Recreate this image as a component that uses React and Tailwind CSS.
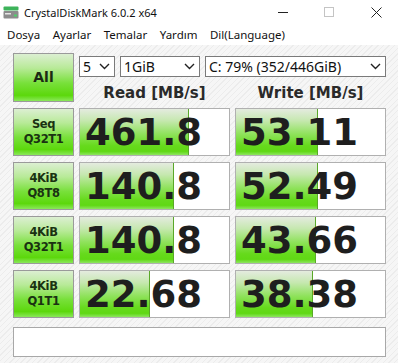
import { useState } from 'react'

const rows = [
  { top: 'Seq', bottom: 'Q32T1', read: '461.8', readBar: 109, write: '53.11', writeBar: 82 },
  { top: '4KiB', bottom: 'Q8T8', read: '140.8', readBar: 94, write: '52.49', writeBar: 82 },
  { top: '4KiB', bottom: 'Q32T1', read: '140.8', readBar: 94, write: '43.66', writeBar: 80 },
  { top: '4KiB', bottom: 'Q1T1', read: '22.68', readBar: 70, write: '38.38', writeBar: 77 },
]

const menus = ['Dosya', 'Ayarlar', 'Temalar', 'Yardım', 'Dil(Language)']

const greenBtn =
  'bg-[linear-gradient(to_bottom,#dcefd2_0%,#b8ea98_30%,#78e03a_62%,#5cd80c_88%,#8ae85a_100%)] border border-[#9a9a9a]'

function Chevron() {
  return (
    <svg width="11" height="7" viewBox="0 0 11 7" className="shrink-0">
      <polyline points="1,1 5.5,5.5 10,1" fill="none" stroke="#222" strokeWidth="1.4" />
    </svg>
  )
}

function Select({ value, className }) {
  return (
    <div className={`flex items-center justify-between h-[21px] bg-white border border-[#7a7a7a] pl-[3px] pr-[4px] ${className}`}>
      <span className="text-[14px] leading-none text-[#111] font-['Noto_Sans',sans-serif]">{value}</span>
      <Chevron />
    </div>
  )
}

function ValueBox({ value, bar }) {
  return (
    <div className="relative w-[151px] h-full bg-white border border-[#b0b0b0] overflow-hidden">
      <div
        className="absolute left-0 top-0 bottom-0 bg-[linear-gradient(to_bottom,#e4ebdf_0%,#c6e8b0_25%,#8ee25a_55%,#66da1c_80%,#60d814_92%,#8ee660_100%)] border-r border-[#5aa828]"
        style={{ width: bar }}
      />
      <span className="relative block pl-[5px] pt-[1px] text-[37px] leading-[46px] font-bold text-[#1e1e1e] font-['DejaVu_Sans',sans-serif]">
        {value}
      </span>
    </div>
  )
}

function AppIcon() {
  return (
    <svg width="16" height="13" viewBox="0 0 16 13">
      <rect x="0.5" y="0.5" width="15" height="4" rx="1" fill="#3db35a" />
      <rect x="0.5" y="5" width="15" height="7.5" rx="1" fill="#8c8c8c" />
      <rect x="2" y="7" width="6" height="1.5" fill="#e6e6e6" />
      <rect x="11" y="8.5" width="3" height="2" fill="#4fd16a" />
    </svg>
  )
}

export default function App() {
  const [title] = useState('CrystalDiskMark 6.0.2 x64')

  return (
    <div className="w-[398px] h-[363px] overflow-hidden bg-white font-['Noto_Sans',sans-serif]">
      {/* title bar */}
      <div className="flex items-center h-[24px] bg-white">
        <div className="pl-[3px] pr-[5px] flex items-center">
          <AppIcon />
        </div>
        <span className="text-[11px] text-[#111] leading-none">{title}</span>
        <div className="ml-auto flex items-center h-full">
          <div className="w-[46px] h-full flex items-center justify-center">
            <div className="w-[10px] h-px bg-[#222]" />
          </div>
          <div className="w-[46px] h-full flex items-center justify-center">
            <div className="w-[10px] h-[10px] border border-[#c4c4c4]" />
          </div>
          <div className="w-[46px] h-full flex items-center justify-center pl-[2px]">
            <svg width="11" height="11" viewBox="0 0 11 11">
              <path d="M0.5 0.5 L10.5 10.5 M10.5 0.5 L0.5 10.5" stroke="#222" strokeWidth="1" />
            </svg>
          </div>
        </div>
      </div>

      {/* menu bar */}
      <div className="flex items-center h-[21px] pl-[7px] gap-[12.5px] bg-white">
        {menus.map((m) => (
          <span key={m} className="text-[11.5px] text-[#111] leading-none">{m}</span>
        ))}
      </div>

      {/* main */}
      <div className="h-[318px] pt-[8px] pl-[13px] pr-[12px] bg-[repeating-linear-gradient(135deg,#f6f6f6_0px,#f6f6f6_3px,#ececec_3px,#ececec_4px)]">
        <div className="flex gap-[5px]">
          <div className={`w-[61px] h-[49px] flex items-center justify-center ${greenBtn}`}>
            <span className="text-[14px] font-bold text-[#1c2a14] font-['DejaVu_Sans',sans-serif]">All</span>
          </div>
          <div className="flex flex-col w-[307px]">
            <div className="flex gap-[5px] mt-[3px]">
              <Select value="5" className="w-[36px]" />
              <Select value="1GiB" className="w-[80px]" />
              <Select value="C: 79% (352/446GiB)" className="w-[181px]" />
            </div>
            <div className="flex gap-[5px] mt-[6px]">
              <div className="w-[151px] text-center text-[15px] font-bold text-[#2a2a2a] font-['DejaVu_Sans',sans-serif] leading-[20px]">
                Read [MB/s]
              </div>
              <div className="w-[151px] text-center text-[15px] font-bold text-[#2a2a2a] font-['DejaVu_Sans',sans-serif] leading-[20px]">
                Write [MB/s]
              </div>
            </div>
          </div>
        </div>

        <div className="flex flex-col gap-[6px] mt-[5px]">
          {rows.map((r, i) => (
            <div key={i} className="flex gap-[5px] h-[48px]">
              <div className={`w-[61px] h-full flex flex-col items-center justify-center ${greenBtn}`}>
                <span className="text-[11.5px] leading-[15px] font-bold text-[#1a3212] font-['DejaVu_Sans',sans-serif] tracking-[-0.4px]">{r.top}</span>
                <span className="text-[11.5px] leading-[15px] font-bold text-[#1a3212] font-['DejaVu_Sans',sans-serif] tracking-[-0.4px]">{r.bottom}</span>
              </div>
              <ValueBox value={r.read} bar={r.readBar} />
              <ValueBox value={r.write} bar={r.writeBar} />
            </div>
          ))}
        </div>

        <div className="mt-[9px] w-[373px] h-[30px] bg-white border border-[#a8a8a8]" />
      </div>
    </div>
  )
}
